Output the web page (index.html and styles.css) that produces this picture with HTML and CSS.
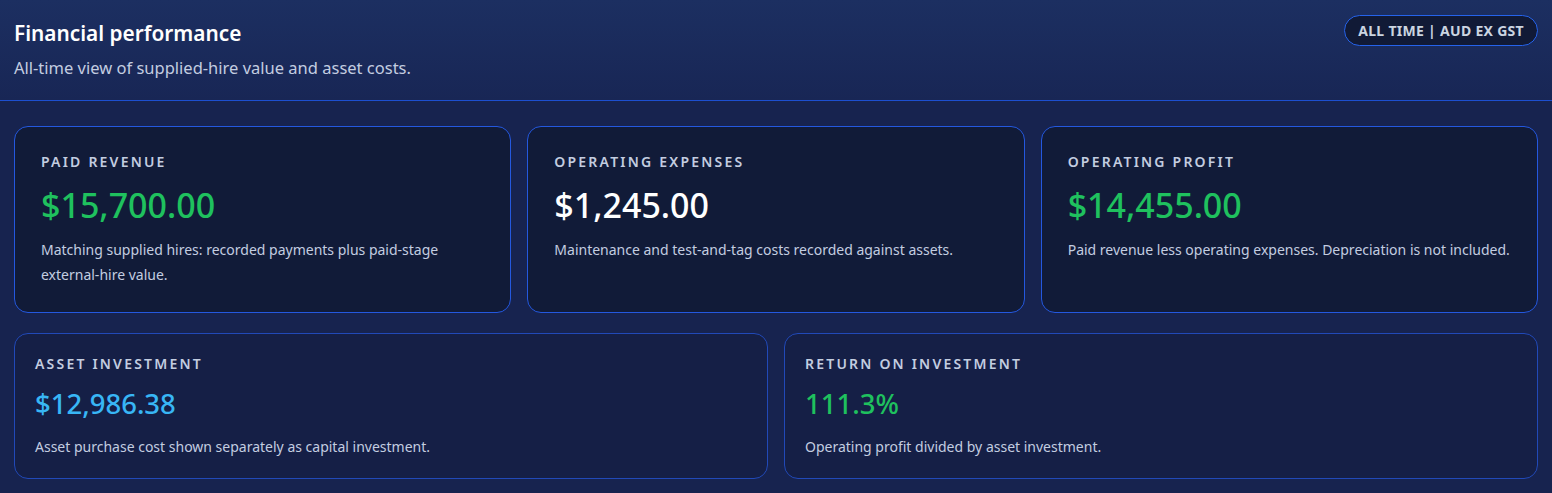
FILE: index.html
```html
<!DOCTYPE html>
<html lang="en">
<head>
<meta charset="utf-8">
<title>Financial performance</title>
<link rel="stylesheet" href="styles.css">
</head>
<body>
<section class="panel">
  <header class="panel-head">
    <div class="head-text">
      <h1 class="title">Financial performance</h1>
      <p class="subtitle">All-time view of supplied-hire value and asset costs.</p>
    </div>
    <span class="badge">ALL TIME | AUD EX GST</span>
  </header>
  <div class="panel-body">
    <div class="row row-3">
      <div class="card card-main">
        <div class="label">PAID REVENUE</div>
        <div class="value green">$15,700.00</div>
        <p class="desc">Matching supplied hires: recorded payments plus paid-stage external-hire value.</p>
      </div>
      <div class="card card-main">
        <div class="label">OPERATING EXPENSES</div>
        <div class="value white">$1,245.00</div>
        <p class="desc">Maintenance and test-and-tag costs recorded against assets.</p>
      </div>
      <div class="card card-main">
        <div class="label">OPERATING PROFIT</div>
        <div class="value green">$14,455.00</div>
        <p class="desc">Paid revenue less operating expenses. Depreciation is not included.</p>
      </div>
    </div>
    <div class="row row-2">
      <div class="card card-sub">
        <div class="label">ASSET INVESTMENT</div>
        <div class="value small blue">$12,986.38</div>
        <p class="desc">Asset purchase cost shown separately as capital investment.</p>
      </div>
      <div class="card card-sub">
        <div class="label">RETURN ON INVESTMENT</div>
        <div class="value small green">111.3%</div>
        <p class="desc">Operating profit divided by asset investment.</p>
      </div>
    </div>
  </div>
</section>
</body>
</html>
```

FILE: styles.css
```css
* { box-sizing: border-box; }
html, body { margin: 0; padding: 0; }
body {
  background: #17234f;
  font-family: "Noto Sans", "Open Sans", sans-serif;
  color: #e2e8f0;
}
.panel { background: #17234f; min-height: 493px; }
.panel-head {
  display: flex;
  justify-content: space-between;
  align-items: flex-start;
  padding: 15px 14px 0 14px;
  height: 101px;
  background: linear-gradient(180deg, #1c2f61 0%, #182655 100%);
  border-bottom: 1px solid #1d4fd0;
}
.title {
  margin: 3px 0 0 0;
  font-size: 20.8px;
  font-weight: 600;
  color: #ffffff;
  line-height: 30px;
}
.subtitle {
  margin: 8px 0 0 0;
  font-size: 16.5px;
  color: #c3cde0;
  line-height: 24px;
}
.badge {
  display: inline-block;
  height: 31px;
  line-height: 29px;
  padding: 0 13px;
  border: 1px solid #2563eb;
  border-radius: 999px;
  background: #111a36;
  color: #cbd5e1;
  font-size: 14px;
  font-weight: 700;
  letter-spacing: 0.3px;
}
.panel-body {
  padding: 25px 14px 15px 14px;
  display: flex;
  flex-direction: column;
  gap: 20px;
}
.row { display: grid; gap: 16px; }
.row-3 { grid-template-columns: repeat(3, 1fr); }
.row-2 { grid-template-columns: repeat(2, 1fr); }
.card {
  border-radius: 14px;
  border: 1px solid #2458df;
}
.card-main {
  background: #111b38;
  height: 187px;
  padding: 25px 26px;
}
.card-sub {
  background: #151f46;
  border-color: #2149b8;
  height: 146px;
  padding: 20px 20px;
}
.label {
  font-size: 14px;
  font-weight: 600;
  letter-spacing: 2.2px;
  color: #c3cde0;
  line-height: 20px;
}
.value {
  margin-top: 11px;
  font-size: 34px;
  line-height: 44px;
  font-weight: 500;
}
.value.small { font-size: 27.5px; line-height: 36px; margin-top: 12px; }
.green { color: #1fc15e; }
.white { color: #ffffff; }
.blue { color: #38b6f5; }
.desc {
  margin: 10px 0 0 0;
  font-size: 14px;
  line-height: 25px;
  color: #c3cde0;
}
.card-sub .desc { margin-top: 12px; }
```
